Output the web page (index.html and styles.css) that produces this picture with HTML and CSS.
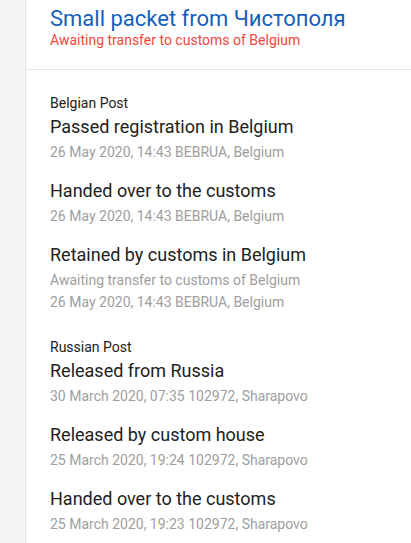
FILE: index.html
```html
<!DOCTYPE html>
<html lang="en">
<head>
	<meta charset="UTF-8">
	<title>Small packet from Чистополя</title>
	<link rel="stylesheet" href="styles.css">
</head>
<body>
	<div class="page">
		<div class="side"></div>
		<div class="main">
			<div class="head">
				<h1>Small packet from Чистополя</h1>
				<p class="status">Awaiting transfer to customs of Belgium</p>
			</div>

			<div class="track">
				<div class="group">
					<h4>Belgian Post</h4>
					<ul>
						<li>
							<h3>Passed registration in Belgium</h3>
							<p>26 May 2020, 14:43 BEBRUA, Belgium</p>
						</li>
						<li>
							<h3>Handed over to the customs</h3>
							<p>26 May 2020, 14:43 BEBRUA, Belgium</p>
						</li>
						<li>
							<h3>Retained by customs in Belgium</h3>
							<p>Awaiting transfer to customs of Belgium</p>
							<p>26 May 2020, 14:43 BEBRUA, Belgium</p>
						</li>
					</ul>
				</div>

				<div class="group">
					<h4>Russian Post</h4>
					<ul>
						<li>
							<h3>Released from Russia</h3>
							<p>30 March 2020, 07:35 102972, Sharapovo</p>
						</li>
						<li>
							<h3>Released by custom house</h3>
							<p>25 March 2020, 19:24 102972, Sharapovo</p>
						</li>
						<li>
							<h3>Handed over to the customs</h3>
							<p>25 March 2020, 19:23 102972, Sharapovo</p>
						</li>
					</ul>
				</div>
			</div>
		</div>
	</div>
</body>
</html>
```

FILE: styles.css
```css
body{margin:0;font-family:Roboto,"Noto Sans CJK SC",sans-serif;color:#212121;background:#fff;}
ul{list-style:none;padding:0;margin:0;}
h1,h3,h4,p{margin:0;font-weight:normal;}
.page{display:flex;min-height:100vh;}
.side{width:25px;flex:none;background:#f5f5f5;border-right:1px solid #e4e4e4;}
.main{flex:1;}
.head{padding:6px 24px 21px;border-bottom:1px solid #e4e4e4;}
.head h1{font-size:22px;line-height:26px;color:#1560b8;}
.head .status{font-size:14px;line-height:16px;color:#f0473c;}
.track{padding:23px 24px 0;}
.group{margin-bottom:24px;}
.group h4{font-size:14px;line-height:20px;}
.group li{margin-bottom:14px;}
.group li:last-child{margin-bottom:0;}
.group h3{font-size:18px;line-height:28px;}
.group p{font-size:14px;line-height:22px;color:#9e9e9e;}
```
